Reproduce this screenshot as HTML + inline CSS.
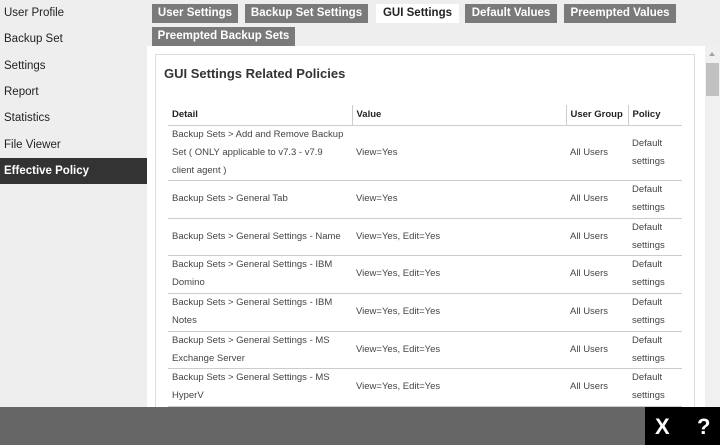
<!DOCTYPE html>
<html><head><meta charset="utf-8"><style>
*{margin:0;padding:0;box-sizing:border-box}
body{width:720px;height:445px;overflow:hidden;background:#eee;font-family:"Liberation Sans",sans-serif;position:relative}
.side{position:absolute;left:0;top:0;width:147px;height:407px;background:#eee}
.side div{position:absolute;left:0;width:147px;height:26px;line-height:26px;padding-left:4px;font-size:11.5px;color:#222}
.side .act{background:#333;color:#fff;font-weight:bold}
.tab{position:absolute;height:19px;line-height:19px;font-size:11.5px;font-weight:bold;color:#fff;background:#7a7a7a;text-align:center}
.tab.on{background:#fff;color:#222}
.main{position:absolute;left:147px;top:46px;width:558px;height:361px;background:#fff;overflow:hidden}
.card{position:absolute;left:8px;top:8px;width:540px;height:400px;border:1px solid #ddd}
h1{position:absolute;left:8px;top:11px;font-size:13px;font-weight:bold;color:#333}
table{position:absolute;left:12px;top:50px;width:514px;border-collapse:collapse;font-size:9.5px;color:#444;table-layout:fixed}
th{text-align:left;font-weight:bold;font-size:9.5px;white-space:nowrap;color:#222;height:20px;padding:0 4px;border-bottom:1px solid #ccc;border-left:1px solid #ccc}
th:first-child{border-left:none}
td{padding:0 4px;line-height:18px;border-bottom:1px solid #ccc;vertical-align:middle}
td:first-child{padding-right:7px}
.sb{position:absolute;left:705px;top:46px;width:15px;height:361px;background:#f0f0f0}
.sb .th{position:absolute;left:1px;top:17px;width:13px;height:33px;background:#c1c1c1}
.sb .ar{position:absolute;left:4px;top:6px;border-left:3px solid transparent;border-right:3px solid transparent;border-bottom:4px solid #a3a3a3}
.bot{position:absolute;left:0;top:407px;width:720px;height:38px;background:#666}
.bk{position:absolute;left:645px;top:0;width:75px;height:38px;background:#000;color:#fff;font-weight:bold;font-size:22px}
</style></head><body>
<div class="side">
<div style="top:0">User Profile</div>
<div style="top:26px">Backup Set</div>
<div style="top:53px">Settings</div>
<div style="top:79px">Report</div>
<div style="top:105px">Statistics</div>
<div style="top:132px">File Viewer</div>
<div class="act" style="top:158px">Effective Policy</div>
</div>
<div class="tab" style="left:152px;top:4px;width:86px">User Settings</div>
<div class="tab" style="left:245px;top:4px;width:123px">Backup Set Settings</div>
<div class="tab on" style="left:376px;top:4px;width:83px">GUI Settings</div>
<div class="tab" style="left:465px;top:4px;width:92px">Default Values</div>
<div class="tab" style="left:564px;top:4px;width:112px">Preempted Values</div>
<div class="tab" style="left:152px;top:27px;width:143px">Preempted Backup Sets</div>
<div class="main"><div class="card">
<h1>GUI Settings Related Policies</h1>
<table>
<tr><th style="width:184px">Detail</th><th style="width:214px">Value</th><th style="width:62px">User Group</th><th>Policy</th></tr>
<tr style="height:55px"><td>Backup Sets &gt; Add and Remove Backup Set ( ONLY applicable to v7.3 - v7.9 client agent )</td><td>View=Yes</td><td>All Users</td><td>Default settings</td></tr>
<tr style="height:38px"><td>Backup Sets &gt; General Tab</td><td>View=Yes</td><td>All Users</td><td>Default settings</td></tr>
<tr style="height:37px"><td>Backup Sets &gt; General Settings - Name</td><td>View=Yes, Edit=Yes</td><td>All Users</td><td>Default settings</td></tr>
<tr style="height:38px"><td>Backup Sets &gt; General Settings - IBM Domino</td><td>View=Yes, Edit=Yes</td><td>All Users</td><td>Default settings</td></tr>
<tr style="height:38px"><td>Backup Sets &gt; General Settings - IBM Notes</td><td>View=Yes, Edit=Yes</td><td>All Users</td><td>Default settings</td></tr>
<tr style="height:37px"><td>Backup Sets &gt; General Settings - MS Exchange Server</td><td>View=Yes, Edit=Yes</td><td>All Users</td><td>Default settings</td></tr>
<tr style="height:38px"><td>Backup Sets &gt; General Settings - MS HyperV</td><td>View=Yes, Edit=Yes</td><td>All Users</td><td>Default settings</td></tr>
</table>
</div></div>
<div class="sb"><div class="ar"></div><div class="th"></div></div>
<div class="bot"><div class="bk"><span style="position:absolute;left:10px;top:7px">X</span><span style="position:absolute;left:52px;top:7px">?</span></div></div>
</body></html>
